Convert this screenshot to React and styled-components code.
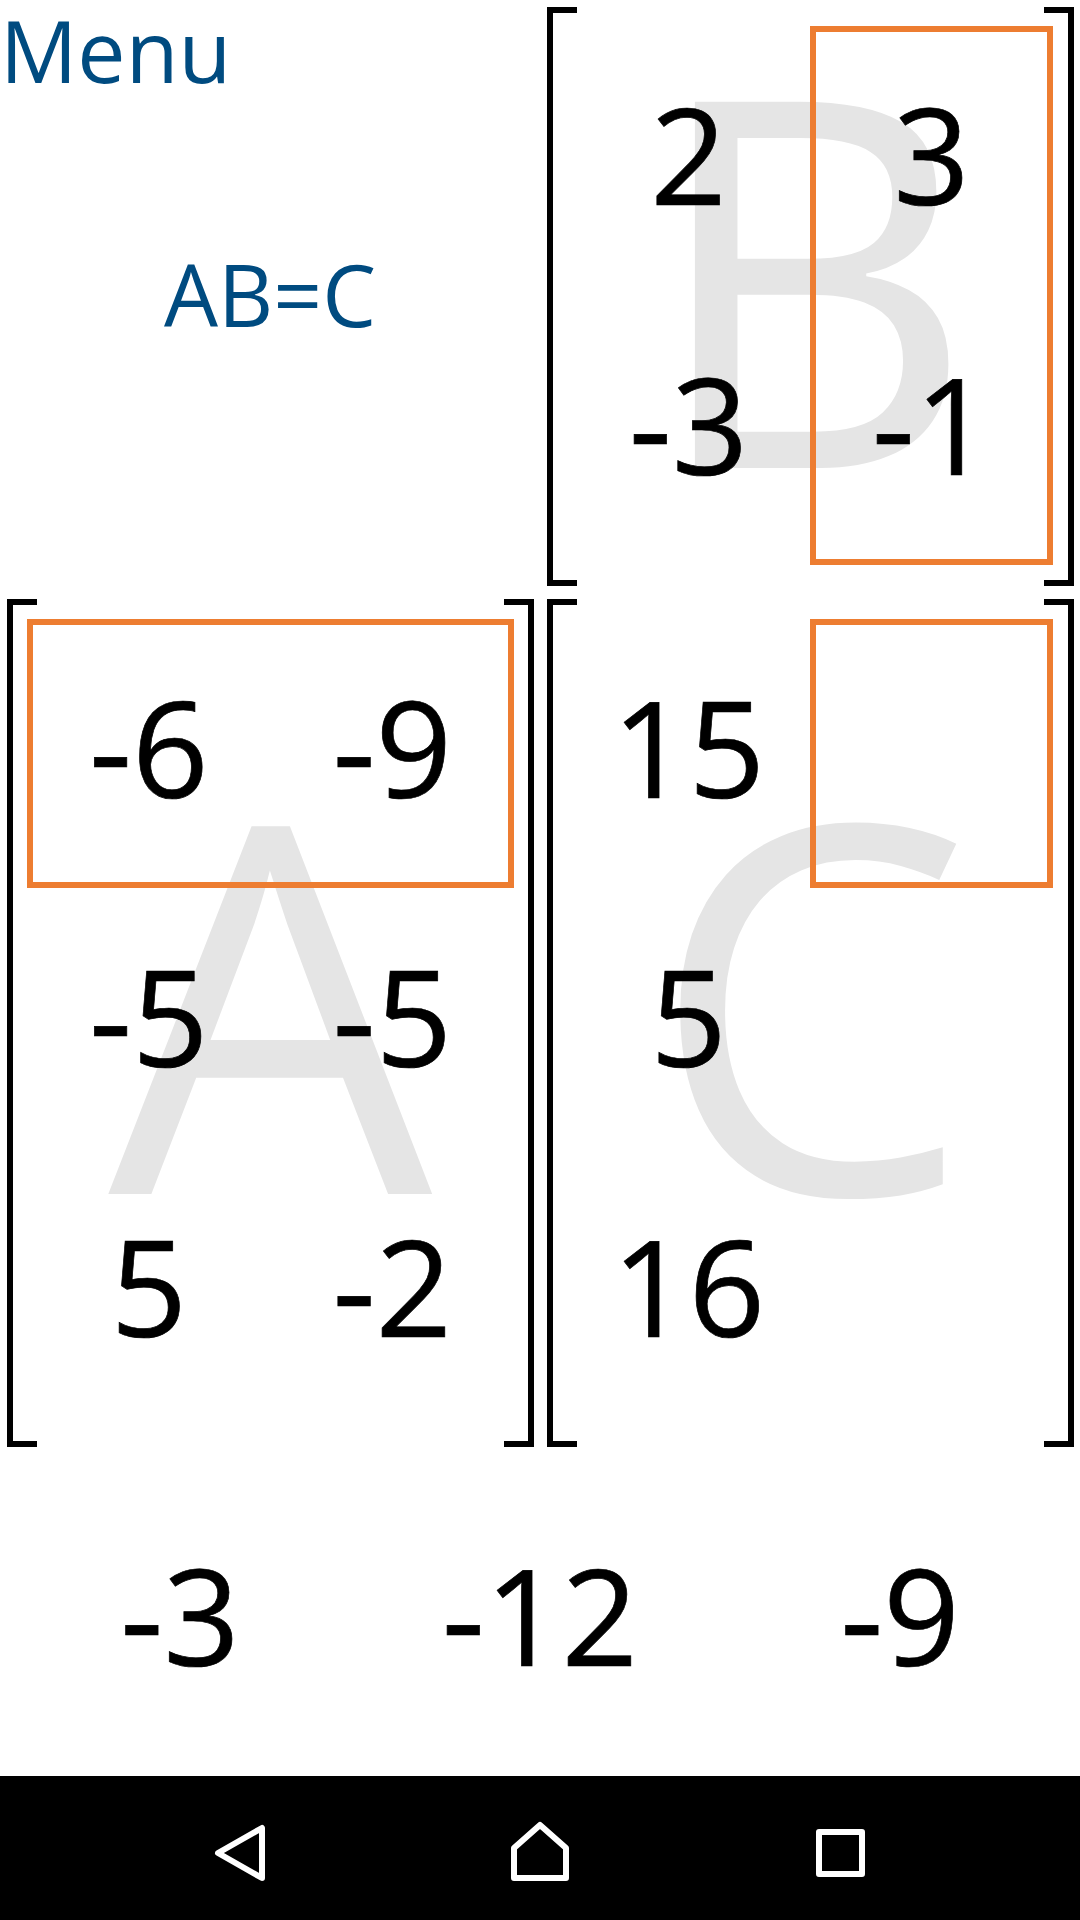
import React from "react";
import styled, { createGlobalStyle } from "styled-components";

const GlobalStyle = createGlobalStyle`
  * { box-sizing: border-box; }
  body { margin: 0; background: #fff; }
`;

const Screen = styled.main`
  display: grid;
  grid-template-rows: 592px 861px 323px 144px;
  width: 1080px;
  height: 1920px;
  overflow: hidden;
  background: #fff;
  color: #000;
  font-family: "Open Sans", "Noto Sans", sans-serif;
`;

const Band = styled.section`
  display: grid;
  grid-template-columns: 1fr 1fr;
`;

const Header = styled.header`
  display: grid;
  grid-template-rows: 100px 1fr 100px;
  color: #004b80;
  font-size: 86px;
`;

const MenuButton = styled.button`
  justify-self: start;
  padding: 0;
  border: 0;
  background: none;
  color: inherit;
  font: inherit;
  line-height: 100px;
`;

const Equation = styled.h1`
  align-self: center;
  margin: 0;
  padding-bottom: 5px;
  font-size: 85.5px;
  font-weight: 400;
  line-height: 98px;
  text-align: center;
`;

const MatrixBox = styled.div`
  display: grid;
  grid-template: minmax(0, 1fr) / 30px minmax(0, 1fr) 30px;
  margin: 7px 6px 6px 7px;
`;

const Bracket = styled.div`
  grid-row: 1;
  grid-column: ${(p) => (p.$side === "left" ? 1 : 3)};
  border: 6px solid #000;
  border-${(p) => (p.$side === "left" ? "right" : "left")}: 0;
`;

const Watermark = styled.div`
  display: flex;
  grid-row: 1;
  grid-column: 1 / -1;
  align-items: center;
  justify-content: center;
  padding-bottom: 55px;
  color: #e5e5e5;
  font-size: 513px;
  line-height: 1;
`;

const Entries = styled.div`
  display: grid;
  grid-row: 1;
  grid-column: 1 / -1;
  grid-template-rows: repeat(${(p) => p.$rows}, minmax(0, 1fr));
  grid-template-columns: repeat(2, minmax(0, 1fr));
  margin: ${(p) => p.$inset};
`;

const Highlight = styled.div`
  grid-area: ${(p) => p.$area};
  border: 6px solid #ed7d31;
`;

const Entry = styled.div`
  display: flex;
  grid-area: ${(p) => `${p.$row} / ${p.$col}`};
  align-items: center;
  justify-content: center;
  padding-bottom: 15px;
  font-size: 134px;
  line-height: 1;
  -webkit-text-stroke: 0.7px #000;
`;

const Choices = styled.section`
  display: grid;
  grid-template-columns: repeat(3, 1fr);
`;

const Choice = styled.button`
  padding: 0 0 2px;
  border: 0;
  background: none;
  color: inherit;
  font-family: inherit;
  font-size: 134px;
  line-height: 1;
  -webkit-text-stroke: 0.7px #000;
`;

const NavBar = styled.nav`
  display: flex;
  align-items: center;
  justify-content: center;
  gap: 220px;
  padding-top: 10px;
  background: #000;
`;

const NavIcon = styled.svg`
  display: block;
  width: 80px;
  height: 80px;
  fill: none;
  stroke: #fff;
  stroke-width: 6;
  stroke-linejoin: round;
`;

function Matrix({ name, rows, highlight, inset }) {
  return (
    <MatrixBox>
      <Bracket $side="left" />
      <Bracket $side="right" />
      <Watermark>{name}</Watermark>
      <Entries $rows={rows.length} $inset={inset}>
        <Highlight $area={highlight} />
        {rows.map((row, r) =>
          row.map((value, c) => (
            <Entry key={`${r}-${c}`} $row={r + 1} $col={c + 1}>
              {value}
            </Entry>
          ))
        )}
      </Entries>
    </MatrixBox>
  );
}

export default function App() {
  return (
    <>
      <GlobalStyle />
      <Screen>
        <Band>
          <Header>
            <MenuButton>Menu</MenuButton>
            <Equation>AB=C</Equation>
          </Header>
          <Matrix
            name="B"
            inset="19px 21px 21px 20px"
            highlight="1 / 2 / 3 / 3"
            rows={[["2", "3"], ["-3", "-1"]]}
          />
        </Band>
        <Band>
          <Matrix
            name="A"
            inset="20px"
            highlight="1 / 1 / 2 / 3"
            rows={[["-6", "-9"], ["-5", "-5"], ["5", "-2"]]}
          />
          <Matrix
            name="C"
            inset="20px 21px 20px 20px"
            highlight="1 / 2 / 2 / 3"
            rows={[["15", ""], ["5", ""], ["16", ""]]}
          />
        </Band>
        <Choices>
          <Choice>-3</Choice>
          <Choice>-12</Choice>
          <Choice>-9</Choice>
        </Choices>
        <NavBar>
          <NavIcon viewBox="200 1813 80 80">
            <path d="M262 1828V1878L218 1853Z" />
          </NavIcon>
          <NavIcon viewBox="500 1813 80 80">
            <path d="M514 1878V1848L540 1825L566 1848V1878Z" />
          </NavIcon>
          <NavIcon viewBox="800 1813 80 80">
            <path d="M819 1832H862V1874H819Z" />
          </NavIcon>
        </NavBar>
      </Screen>
    </>
  );
}
